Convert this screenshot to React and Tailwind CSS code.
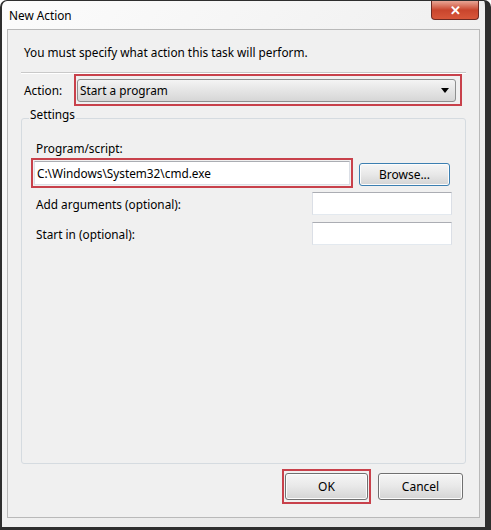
// New Action dialog (Windows 7 style)
function Field({ children }) {
  return (
    <div className="h-[23px] w-[140px] border border-[#dbdfe6] border-t-[#abadb3] border-b-[#e3e9ef] bg-white">
      {children}
    </div>
  );
}

function WinButton({ children, focused = false, className = "" }) {
  return (
    <button
      type="button"
      className={
        "flex items-center justify-center rounded-[3px] border bg-gradient-to-b from-[#f6f6f6] via-[#e8e8e8] to-[#d4d4d4] text-[12px] text-black shadow-[inset_0_0_0_1px_#fcfcfc] " +
        (focused ? "border-[#3c7fb1] shadow-[inset_0_0_0_1px_#bfe3f8]" : "border-[#707070]") +
        " " +
        className
      }
    >
      {children}
    </button>
  );
}

export default function App() {
  return (
    <div className="h-[530px] w-[491px] bg-white font-['Noto_Sans',sans-serif] text-[11.8px] leading-[16px] text-black">
      <div className="flex h-full flex-col rounded-t-[7px] border-t border-l-2 border-r-[6px] border-b-[3px] border-[#2e2e2e] bg-gradient-to-br from-[#fcfcfc] via-[#f0f0f0] to-[#e2e2e2]">
        {/* title bar */}
        <div className="flex h-[28px] items-start justify-between">
          <span className="pl-[7px] pt-[6px]">New Action</span>
          <button
            type="button"
            className="mr-[6px] flex h-[19px] w-[48px] items-center justify-center rounded-b-[4px] border border-t-0 border-[#6d2a22] bg-gradient-to-b from-[#e8a595] via-[#c9452d] to-[#d8573a] text-[13px] font-bold leading-none text-white"
          >
            ✕
          </button>
        </div>

        {/* client area */}
        <div className="mx-[5px] flex flex-1 flex-col border border-[#b9b9b9] bg-[#f0f0f0]">
          <p className="pl-[16px] pt-[14px]">
            You must specify what action this task will perform.
          </p>
          <div className="mx-[13px] mt-[12px] border-t border-b border-t-[#c9c9c9] border-b-white" />

          <div className="flex items-center pl-[16px]">
            <span className="w-[50px]">Action:</span>
            <div className="flex h-[32px] w-[388px] items-center border-2 border-[#c8414b] pl-[1px] pr-[4px]">
              <div className="flex h-[23px] flex-1 items-center justify-between rounded-[3px] border border-[#8e8f8f] bg-gradient-to-b from-[#f4f4f4] to-[#d6d6d6] pl-[2px] pr-[6px]">
                <span>Start a program</span>
                <svg width="8" height="5" viewBox="0 0 8 5">
                  <path d="M0 0 H8 L4 5 Z" fill="#000" />
                </svg>
              </div>
            </div>
          </div>

          <fieldset className="mx-[13px] mb-[5px] flex min-h-0 flex-1 flex-col rounded-[3px] border border-[#d5dbe0] px-0 pb-0">
            <legend className="ml-[7px] px-[1px] pb-[8px]">Settings</legend>

            <span className="mt-[10px] pl-[14px]">Program/script:</span>
            <div className="mt-[2px] flex items-center pl-[9px]">
              <div className="h-[30px] w-[322px] border-2 border-[#c8414b] p-[1px]">
                <div className="flex h-full items-center border border-[#dbdfe6] border-t-[#abadb3] bg-white pl-[2px]">
                  C:\Windows\System32\cmd.exe
                </div>
              </div>
              <WinButton focused className="ml-[6px] mt-[3px] h-[23px] w-[91px]">
                Browse...
              </WinButton>
            </div>

            <div className="mt-[4px] flex items-center justify-between pl-[14px] pr-[13px]">
              <span>Add arguments (optional):</span>
              <Field />
            </div>
            <div className="mt-[7px] flex items-center justify-between pl-[14px] pr-[13px]">
              <span>Start in (optional):</span>
              <Field />
            </div>
          </fieldset>

          <div className="flex items-center justify-end pb-[13px] pr-[16px]">
            <div className="flex h-[35px] w-[89px] items-center border-2 border-[#c8414b] px-[1px]">
              <WinButton className="h-[27px] w-full">OK</WinButton>
            </div>
            <WinButton className="ml-[7px] h-[27px] w-[85px]">Cancel</WinButton>
          </div>
        </div>
        <div className="h-[9px]" />
      </div>
    </div>
  );
}
